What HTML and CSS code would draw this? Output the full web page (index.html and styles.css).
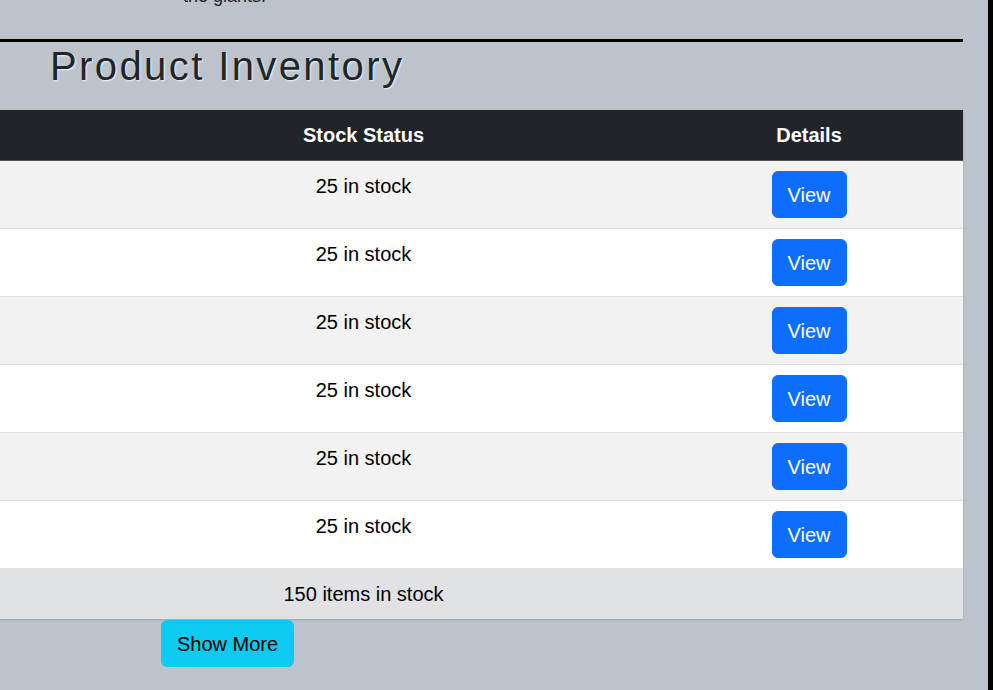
FILE: index.html
```html
<!DOCTYPE html>
<html lang="en">
<head>
<meta charset="utf-8">
<title>Product Inventory</title>
<link rel="stylesheet" href="styles.css">
</head>
<body>
<div class="page">
  <main class="main">
    <p class="intro">the giants.</p>
    <hr class="rule">
    <h1 class="title">Product Inventory</h1>
    <table class="inventory">
      <colgroup>
        <col class="col-name">
        <col class="col-stock">
        <col class="col-details">
      </colgroup>
      <thead>
        <tr>
          <th></th>
          <th>Stock Status</th>
          <th>Details</th>
        </tr>
      </thead>
      <tbody>
        <tr><td></td><td>25 in stock</td><td><button class="btn-view">View</button></td></tr>
        <tr><td></td><td>25 in stock</td><td><button class="btn-view">View</button></td></tr>
        <tr><td></td><td>25 in stock</td><td><button class="btn-view">View</button></td></tr>
        <tr><td></td><td>25 in stock</td><td><button class="btn-view">View</button></td></tr>
        <tr><td></td><td>25 in stock</td><td><button class="btn-view">View</button></td></tr>
        <tr><td></td><td>25 in stock</td><td><button class="btn-view">View</button></td></tr>
      </tbody>
      <tfoot>
        <tr><td></td><td>150 items in stock</td><td></td></tr>
      </tfoot>
    </table>
    <div class="more-row">
      <button class="btn-more">Show More</button>
    </div>
  </main>
  <div class="side"></div>
</div>
</body>
</html>
```
FILE: styles.css
```css
html, body {
  margin: 0;
  padding: 0;
  background: #bcc3ca;
  font-family: "Liberation Sans", Arial, sans-serif;
  color: #000;
  overflow: hidden;
}

.page {
  display: flex;
  min-height: 690px;
}

.main {
  width: 963px;
  flex: 0 0 963px;
}

.side {
  flex: 1;
  border-right: 5px solid #000;
}

.intro {
  margin: -17px 0 0 183px;
  font-size: 18px;
  line-height: 27px;
  color: #212529;
}

.rule {
  margin: 29px 0 0 0;
  border: 0;
  border-top: 3px solid #000;
  height: 0;
}

.title {
  margin: 0 0 20px 50px;
  font-size: 40px;
  line-height: 48px;
  font-weight: 400;
  letter-spacing: 2.4px;
  color: #212529;
  text-shadow: 1px 1px 2px #eaf6ff;
}

.inventory {
  width: 963px;
  border-collapse: collapse;
  table-layout: fixed;
  font-size: 20px;
  line-height: 30px;
  box-shadow: 0 1px 2px rgba(0, 0, 0, 0.18);
}

.col-name { width: 72px; }
.col-stock { width: 583px; }
.col-details { width: 308px; }

.inventory th,
.inventory td {
  padding: 10px 8px;
  text-align: center;
  vertical-align: top;
}

.inventory thead th {
  background: #212529;
  color: #fff;
  font-weight: 700;
  border-bottom: 1px solid #4a4f54;
}

.inventory tbody tr {
  background: #fff;
}

.inventory tbody tr:nth-child(odd) {
  background: #f2f2f2;
}

.inventory tbody td {
  border-bottom: 1px solid #dee2e6;
}

.inventory tbody tr:last-child td {
  border-bottom: 0;
}

.inventory tfoot td {
  background: #e0e2e5;
  padding: 11px 8px 10px;
}

.btn-view {
  font-family: inherit;
  font-size: 20px;
  line-height: 30px;
  padding: 7.5px 15px;
  border: 1px solid #0d6efd;
  border-radius: 6px;
  background: #0d6efd;
  color: #fff;
  display: inline-block;
  vertical-align: top;
}

.more-row {
  padding: 1px 0 0 161px;
}

.btn-more {
  font-family: inherit;
  font-size: 20px;
  line-height: 30px;
  padding: 7.5px 15px;
  border: 1px solid #0dcaf0;
  border-radius: 6px;
  background: #0dcaf0;
  color: #000;
}
```
